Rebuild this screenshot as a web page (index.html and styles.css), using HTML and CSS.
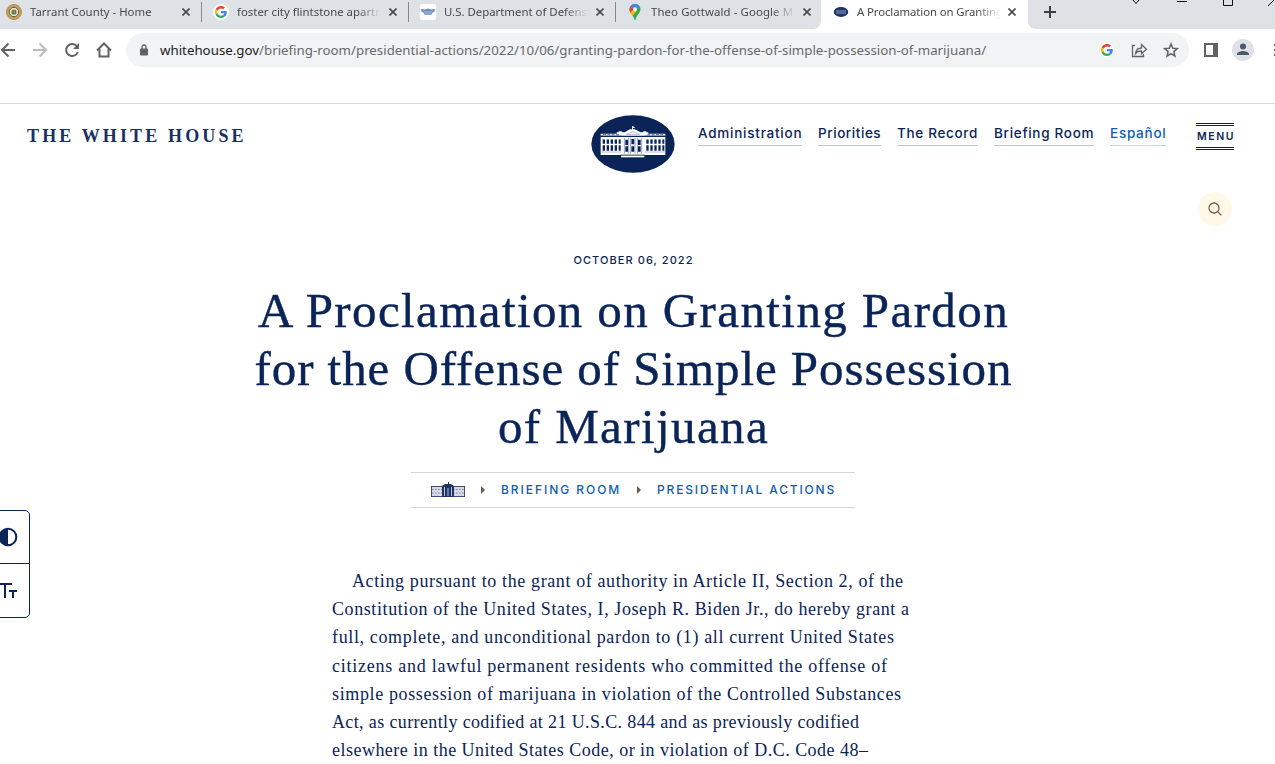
FILE: index.html
```html
<!DOCTYPE html>
<html lang="en">
<head>
<meta charset="utf-8">
<title>A Proclamation on Granting Pardon</title>
<link rel="stylesheet" href="styles.css">
</head>
<body>
<svg class="defs" width="0" height="0">
  <symbol id="google" viewBox="0 0 48 48">
    <path fill="#ea4335" d="M24 9.500c3.500 0 6.700 1.200 9.200 3.600l6.900-6.900C35.900 2.400 30.500 0 24 0 14.600 0 6.500 5.400 2.600 13.200l8 6.200C12.400 13.700 17.700 9.500 24 9.500z"/>
    <path fill="#4285f4" d="M47 24.500c0-1.600-.2-3.100-.4-4.500H24v9h12.900c-.6 3-2.300 5.500-4.800 7.200l7.700 6C44.400 38 47 31.800 47 24.500z"/>
    <path fill="#fbbc05" d="M10.500 28.600a14.500 14.500 0 0 1 0-9.200l-8-6.200a24 24 0 0 0 0 21.600l8-6.200z"/>
    <path fill="#34a853" d="M24 48c6.500 0 11.900-2.100 15.900-5.800l-7.700-6c-2.200 1.400-4.900 2.300-8.200 2.300-6.300 0-11.600-4.200-13.500-9.900l-8 6.200C6.500 42.600 14.600 48 24 48z"/>
  </symbol>
  <symbol id="close" viewBox="0 0 8 8"><path d="M.5.5l7 7M7.500.5l-7 7" stroke="#45494d" stroke-width="1.600"/></symbol>
</svg>
<div class="tabs">
  <div class="strip strip-left">
    <div class="tab first"><svg class="fav" viewBox="0 0 16 16"><circle cx="8" cy="8" r="7.500" fill="#c9a058" stroke="#b38a4a"/><circle cx="8" cy="8" r="4.700" fill="#efe6c8" stroke="#54613d"/><circle cx="8" cy="8" r="2.600" fill="#4f7550"/><circle cx="8" cy="7.800" r="1.200" fill="#c9825a"/></svg><span class="label">Tarrant County - Home</span><svg class="x"><use href="#close"/></svg></div>
    <div class="tab"><svg class="fav" viewBox="0 0 16 16"><circle cx="8" cy="8" r="8" fill="#fff"/><use href="#google" x="2" y="2" width="12" height="12"/></svg><span class="label">foster city flintstone apartm</span><svg class="x"><use href="#close"/></svg></div>
    <div class="tab"><svg class="fav" viewBox="0 0 16 16"><rect width="16" height="16" rx="2" fill="#fff"/><path d="M1 5l4 .5L8 4.500l3 1 4-.5-.7 3-2 .5-1 2.500H4.700l-1-2.500-2-.5z" fill="#6f8fc0"/><path d="M4 8h8M5 10h6" stroke="#b0c1dc"/></svg><span class="label">U.S. Department of Defens</span><svg class="x"><use href="#close"/></svg></div>
    <div class="tab last"><svg class="fav" viewBox="0 0 16 16"><path d="M8 0C4.500 0 2.500 2.600 2.500 5.300 2.500 9 6.500 11 7.500 16h1c1-5 5-7 5-10.700C13.500 2.600 11.500 0 8 0z" fill="#34a853"/><path d="M3.700 9C2.800 7.800 2.500 6.500 2.500 5.300 2.500 4.200 2.900 3 3.600 2L8 5z" fill="#ea4335"/><path d="M3.600 2C4.600.7 6.200 0 8 0c1.700 0 3.300.7 4.200 1.700L8 6z" fill="#4285f4"/><path d="M3.500 8.800L7 4.500 9.700 7 5.700 11.600C5 10.700 4.100 9.800 3.500 8.800z" fill="#fbbc04"/><circle cx="8" cy="5.300" r="2" fill="#fff"/></svg><span class="label google-maps">Theo Gottwald - Google M</span><svg class="x"><use href="#close"/></svg></div>
  </div>
  <div class="tab active"><svg class="fav" viewBox="0 0 16 16"><ellipse cx="8" cy="8" rx="7.200" ry="5" fill="#1c3468"/><path d="M3 7h10M3 9h10" stroke="#8e9cbc"/></svg><span class="label">A Proclamation on Granting</span><svg class="x"><use href="#close"/></svg></div>
  <div class="strip strip-right">
    <svg width="247" height="29" viewBox="0 0 247 29" fill="none"><path d="M16 12h12M22 6v12" stroke="#3c4043" stroke-width="2"/><path d="M104-1l4 4.500 4-4.500M149 1.500h10M195.500-3v8.500h9V-3M247-1l-7 7" stroke="#111"/></svg>
  </div>
</div>
<div class="toolbar">
  <svg class="nav-icons" viewBox="0 0 126 36" fill="none" stroke="#5f6368" stroke-width="2"><path d="M15 16H2M8.500 9.500L2 16l6.500 6.500"/><path d="M33 16h13M39.500 9.500L46 16l-6.500 6.500" stroke="#babcbe"/><path d="M77 12.500a6 6 0 1 0 .8 5.500"/><path d="M79 9v6h-6z" fill="#5f6368" stroke="none"/><path d="M97 16.500l7-7 7 7M99.500 15v7.500h9V15"/></svg>
  <div class="omnibox">
    <svg class="lock" viewBox="0 0 8 12"><rect y="4.500" width="8" height="7" rx="1" fill="#5f6368"/><path d="M2 5V3a2 2 0 0 1 4 0v2" fill="none" stroke="#5f6368" stroke-width="1.300"/></svg>
    <span class="url"><b>whitehouse.gov</b>/briefing-room/presidential-actions/2022/10/06/granting-pardon-for-the-offense-of-simple-possession-of-marijuana/</span>
    <svg class="actions" viewBox="0 0 88 16" fill="none" stroke="#5f6368" stroke-width="1.300"><circle cx="8" cy="8" r="7.500" fill="#fff" stroke="none"/><use href="#google" x="2" y="2" width="12" height="12" stroke="none"/><path d="M36 3.500h-2.500v11H44.500V12M36.500 11.500c.5-4 3-5.500 6-5.500V2.500l5 4.800-5 4.500V9c-3 0-4.500.5-6 2.500z"/><path d="M72 2l1.800 4.200 4.500.4-3.400 3 1 4.500L72 11.700l-3.900 2.400 1-4.500-3.400-3 4.500-.4z" stroke-width="1.500"/></svg>
  </div>
  <svg class="right-icons" viewBox="0 0 86 36" fill="#5f6368"><path d="M15 9h14v14H15zM17 11v10h7V11z" fill-rule="evenodd"/><circle cx="54" cy="16" r="11" fill="#dee1e6"/><circle cx="54" cy="12.500" r="3" fill="#4c5a70"/><path d="M48 21v-1c0-2 4-3 6-3s6 1 6 3v1z" fill="#4c5a70"/><path d="M85 10h2v2h-2zM85 15h2v2h-2zM85 20h2v2h-2z"/></svg>
</div>
<header class="site">
  <div class="brand">THE WHITE HOUSE</div>
  <svg class="seal" viewBox="34 30 252 174"><ellipse cx="160" cy="117" rx="125" ry="86" fill="#0a2458"/>
    <g fill="#fff"><path d="M63 86h48v-4h6v-3h8l4 3h6l16-9h6v-10l8 3v3h-5v4h6l16 9h6l4-3h8v3h6v4h51v6H63z"/><path d="M63 96h194v54H63z"/><path d="M124 151h70v6h-70z"/></g>
    <g stroke="#0a2458" fill="none"><path d="M70 89h48M203 89h50" stroke-dasharray="9 4" stroke-width="2"/><path d="M63 94h62M195 94h62" stroke-width="4"/><path d="M69 110h54M200 110h54" stroke-width="13" stroke-dasharray="7 5"/><path d="M69 129h54M200 129h54" stroke-width="17" stroke-dasharray="7 5"/><path d="M137 112h8M155 110h9M175 112h8M137 132h8M155 132h9M175 132h8" stroke-width="16"/><path d="M122 150h74" stroke-width="2"/></g>
    <g stroke="#9aa5c1" fill="none" stroke-width="3"><path d="M63 141h62M195 141h62" stroke-width="2"/><path d="M134 98v48M147 98v48M153 98v48M166 98v48M173 98v48M186 98v48"/><path d="M140 88l20-8 20 8z" stroke-width="2"/></g></svg>
  <nav>
    <a class="n1">Administration</a><a class="n2">Priorities</a><a class="n3">The Record</a><a class="n4">Briefing Room</a><a class="es">Español</a>
  </nav>
  <div class="menu">MENU</div>
</header>
<div class="search-row"><div class="search"><svg viewBox="0 0 14 14" fill="none" stroke="#7b5c4c" stroke-width="1.300"><circle cx="6" cy="6" r="5"/><path d="M9.600 9.600l3.700 3.700"/></svg></div></div>
<main>
  <div class="date">OCTOBER 06, 2022</div>
  <h1><span class="h1a">A Proclamation on Granting Pardon</span><br><span class="h1b">for the Offense of Simple Possession</span><br><span class="h1c">of Marijuana</span></h1>
  <div class="crumbs">
    <svg class="house" viewBox="0 0 34 15"><path d="M0 5h34v9H0z" fill="#d3d8e2"/><path d="M0 4.500h34M0 14.500h34M.5 4v10M33.500 4v10" stroke="#3d4f79"/><path d="M1 7.500h32M1 11h32" stroke="#7f8ba8" stroke-dasharray="1.500 1.500"/><path d="M11 4l3-2h6l3 2v11H11z" fill="#1d3467"/><path d="M13.500 5v9M17 6v8M20.500 5v9" stroke="#bbc3d6"/><path d="M17.500 0v3" stroke="#1d3467"/></svg>
    <i class="arrow"></i><a class="c1">BRIEFING ROOM</a><i class="arrow"></i><a class="c2">PRESIDENTIAL ACTIONS</a>
  </div>
  <p><span class="b1">Acting pursuant to the grant of authority in Article II, Section 2, of the</span><br><span class="b2">Constitution of the United States, I, Joseph R. Biden Jr., do hereby grant a</span><br><span class="b3">full, complete, and unconditional pardon to (1) all current United States</span><br><span class="b4">citizens and lawful permanent residents who committed the offense of</span><br><span class="b5">simple possession of marijuana in violation of the Controlled Substances</span><br><span class="b6">Act, as currently codified at 21 U.S.C. 844 and as previously codified</span><br><span class="b7">elsewhere in the United States Code, or in violation of D.C. Code 48–</span></p>
</main>
<aside class="access">
  <div><svg viewBox="0 0 20 20"><circle cx="10" cy="10" r="8.300" fill="none" stroke="#0a2458" stroke-width="2"/><path d="M10 1.700v16.600a8.300 8.300 0 0 1 0-16.600z" fill="#0a2458"/></svg></div>
  <div><svg viewBox="0 0 20 20" fill="none" stroke="#0a2458" stroke-width="2"><path d="M0 4h14M7 4v14M11 11h8M15 11v7"/></svg></div>
</aside>
</body>
</html>
```
FILE: styles.css
```css
* { box-sizing: border-box; }
body { margin: 0; width: 1275px; height: 764px; overflow: hidden; background: #fff; color: #0a2458; font-family: Inter, "Liberation Sans", sans-serif; position: relative; }
svg { display: block; flex: none; }
.defs { position: absolute; }

.tabs { display: flex; height: 29px; font: 11.400px/24px "Noto Sans", "Open Sans", sans-serif; color: #45494d; }
.strip { display: flex; background: #dee1e6; height: 29px; }
.strip-left { width: 821px; border-bottom-right-radius: 8px; }
.strip-right { width: 247px; border-bottom-left-radius: 8px; overflow: hidden; }
.tab { display: flex; width: 207px; height: 24px; padding-left: 12px; align-items: center; background: linear-gradient(#85898e, #85898e) no-repeat 0 2px / 1px 20px; }
.tab.first { width: 201px; padding-left: 6px; background: none; }
.tab.last { width: 206px; }
.tab.active { background: none; letter-spacing: -.1px; }
.fav { width: 16px; height: 16px; margin-right: 8px; }
.label { width: 152px; margin-right: -9px; white-space: nowrap; -webkit-mask-image: linear-gradient(90deg, #000 120px, transparent 144px); }
.google-maps { letter-spacing: .1px; }
.x { width: 8px; height: 8px; margin-left: 9px; }
.tab.active .x { margin-left: 8px; }

.toolbar { display: flex; height: 75px; padding-top: 4px; border-bottom: 1px solid #dadada; }
.nav-icons { width: 126px; height: 36px; margin-top: 1px; }
.omnibox { display: flex; align-items: center; width: 1063px; height: 34px; border-radius: 17px; background: #f1f3f4; padding-left: 14px; font: 13.310px/34px "Noto Sans", "Open Sans", sans-serif; color: #666a6e; }
.omnibox b { font-weight: 400; color: #202124; }
.lock { width: 8px; height: 12px; margin-right: 12px; }
.url { width: 839px; white-space: nowrap; }
.actions { width: 88px; height: 16px; margin-left: 100px; }
.right-icons { width: 86px; height: 36px; margin-top: 1px; }

.site { display: flex; height: 88px; padding-left: 27px; align-items: flex-start; }
.brand { width: 564px; padding-top: 21px; font: bold 18px/22px "Liberation Serif", serif; letter-spacing: 3.130px; color: #1a2f62; white-space: nowrap; }
.seal { width: 84px; height: 58px; margin-top: 11px; }
.site nav { display: flex; gap: 16px; margin: 19px 0 0 23px; font-size: 13.500px; font-weight: 500; line-height: 21px; white-space: nowrap; }
.site nav a { height: 23px; border-bottom: 1px solid #c0c3d4; }
.site nav .n1 { width: 104px; letter-spacing: .760px; }
.site nav .n2 { width: 63px; letter-spacing: .560px; }
.site nav .n3 { width: 81px; letter-spacing: .680px; }
.site nav .n4 { width: 100px; letter-spacing: .700px; }
.site nav .es { width: 56px; letter-spacing: .740px; color: #0f5cb5; border-color: #bcd5ec; }
.menu { width: 38px; height: 27px; margin: 19px 0 0 30px; border: double #0a2458; border-width: 3px 0; font-size: 10.500px; font-weight: 600; line-height: 21px; padding-left: 1px; letter-spacing: 1.600px; white-space: nowrap; }
.search-row { display: flex; justify-content: flex-end; padding-right: 43px; }
.search { display: flex; align-items: center; justify-content: center; width: 34px; height: 34px; border-radius: 50%; background: #fef8e8; }
.search svg { width: 14px; height: 14px; }

main { display: flex; flex-direction: column; align-items: center; width: 1266px; }
.date { margin-top: 26px; font-size: 11px; font-weight: 500; line-height: 16px; letter-spacing: 1.070px; padding-left: 1px; }
h1 { margin: 14px 0 0; font: 400 49px/58px "Liberation Serif", serif; text-align: center; white-space: nowrap; padding-left: 1px; -webkit-text-stroke: .4px; }
.h1a { letter-spacing: 1.400px; }
.h1b { letter-spacing: .930px; }
.h1c { letter-spacing: 1.400px; }
.crumbs { display: flex; align-items: center; width: 444px; height: 36px; margin-top: 16px; padding: 0 0 1px 20px; border: solid #d5d5e2; border-width: 1px 0; font-size: 12px; line-height: 14px; font-weight: 500; color: #0f5cb5; white-space: nowrap; }
.house { width: 34px; height: 15px; }
.arrow { margin: 0 16px; border: solid transparent; border-width: 4px 0 4px 4px; border-left-color: #735747; }
.c1 { width: 120px; letter-spacing: 1.950px; }
.c2 { letter-spacing: 1.840px; }
p { width: 602px; margin: 59px 0 0; text-indent: 20px; font: 18px/28.200px "Liberation Serif", serif; white-space: nowrap; }
.b1 { letter-spacing: .611px; }
.b2 { letter-spacing: .588px; }
.b3 { letter-spacing: .641px; }
.b4 { letter-spacing: .746px; }
.b5 { letter-spacing: .628px; }
.b6 { letter-spacing: .371px; }
.b7 { letter-spacing: .479px; }

.access { position: absolute; left: -10px; top: 510px; width: 40px; height: 108px; border: 1px solid #0a2458; border-radius: 5px; background: #fff; }
.access div { height: 52px; padding: 16px 0 0 7px; }
.access div + div { border-top: 1px solid #0a2458; }
.access svg { width: 20px; height: 20px; }
```
